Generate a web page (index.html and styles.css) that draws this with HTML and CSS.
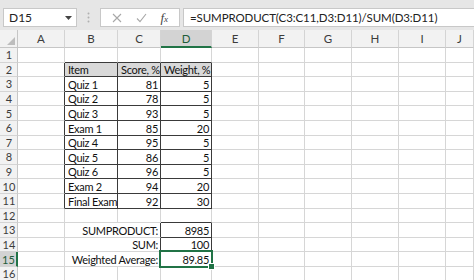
FILE: index.html
```html
<!DOCTYPE html>
<html>
<head>
<meta charset="utf-8">
<link rel="stylesheet" href="styles.css">
</head>
<body>
<div class="app">
  <div class="fbar">
    <div class="namebox"><span>D15</span><svg class="dd" width="7" height="4" viewBox="0 0 7 4"><path d="M0 0h7L3.5 4z" fill="#444"/></svg></div>
    <svg class="dots" width="3" height="11" viewBox="0 0 3 11"><circle cx="1.5" cy="1.5" r="1" fill="#b0b0b0"/><circle cx="1.5" cy="5.5" r="1" fill="#b0b0b0"/><circle cx="1.5" cy="9.5" r="1" fill="#b0b0b0"/></svg>
    <div class="btns">
      <svg width="10" height="10" viewBox="0 0 10 10"><path d="M1 1l8 8M9 1l-8 8" stroke="#a8a8a8" stroke-width="1.1"/></svg>
      <svg width="11" height="10" viewBox="0 0 11 10"><path d="M1 5.5l3 3.2L10 1" stroke="#a8a8a8" stroke-width="1.1" fill="none"/></svg>
      <span class="fx">f<span class="x">x</span></span>
    </div>
    <div class="formula">=SUMPRODUCT(C3:C11,D3:D11)/SUM(D3:D11)</div>
  </div>
  <div class="sheet">
    <div class="row hrow">
      <div class="corner"><svg width="8" height="8" viewBox="0 0 8 8"><path d="M8 0v8H0z" fill="#bdbdbd"/></svg></div>
      <div class="ch">A</div><div class="ch">B</div><div class="ch">C</div><div class="ch sel">D</div><div class="ch">E</div><div class="ch">F</div><div class="ch">G</div><div class="ch">H</div><div class="ch">I</div><div class="ch">J</div>
    </div>
    <div class="row">
      <div class="rh">1</div><div class="c"></div><div class="c bb"></div><div class="c bb"></div><div class="c bb"></div><div class="c"></div><div class="c"></div><div class="c"></div><div class="c"></div><div class="c"></div><div class="c"></div>
    </div>
    <div class="row">
      <div class="rh">2</div><div class="c rb"></div><div class="c t hd">Item</div><div class="c t hd">Score, %</div><div class="c t hd">Weight, %</div><div class="c"></div><div class="c"></div><div class="c"></div><div class="c"></div><div class="c"></div><div class="c"></div>
    </div>
    <div class="row">
      <div class="rh">3</div><div class="c rb"></div><div class="c t">Quiz 1</div><div class="c t n">81</div><div class="c t n">5</div><div class="c"></div><div class="c"></div><div class="c"></div><div class="c"></div><div class="c"></div><div class="c"></div>
    </div>
    <div class="row">
      <div class="rh">4</div><div class="c rb"></div><div class="c t">Quiz 2</div><div class="c t n">78</div><div class="c t n">5</div><div class="c"></div><div class="c"></div><div class="c"></div><div class="c"></div><div class="c"></div><div class="c"></div>
    </div>
    <div class="row">
      <div class="rh">5</div><div class="c rb"></div><div class="c t">Quiz 3</div><div class="c t n">93</div><div class="c t n">5</div><div class="c"></div><div class="c"></div><div class="c"></div><div class="c"></div><div class="c"></div><div class="c"></div>
    </div>
    <div class="row">
      <div class="rh">6</div><div class="c rb"></div><div class="c t">Exam 1</div><div class="c t n">85</div><div class="c t n">20</div><div class="c"></div><div class="c"></div><div class="c"></div><div class="c"></div><div class="c"></div><div class="c"></div>
    </div>
    <div class="row">
      <div class="rh">7</div><div class="c rb"></div><div class="c t">Quiz 4</div><div class="c t n">95</div><div class="c t n">5</div><div class="c"></div><div class="c"></div><div class="c"></div><div class="c"></div><div class="c"></div><div class="c"></div>
    </div>
    <div class="row">
      <div class="rh">8</div><div class="c rb"></div><div class="c t">Quiz 5</div><div class="c t n">86</div><div class="c t n">5</div><div class="c"></div><div class="c"></div><div class="c"></div><div class="c"></div><div class="c"></div><div class="c"></div>
    </div>
    <div class="row">
      <div class="rh">9</div><div class="c rb"></div><div class="c t">Quiz 6</div><div class="c t n">96</div><div class="c t n">5</div><div class="c"></div><div class="c"></div><div class="c"></div><div class="c"></div><div class="c"></div><div class="c"></div>
    </div>
    <div class="row">
      <div class="rh">10</div><div class="c rb"></div><div class="c t">Exam 2</div><div class="c t n">94</div><div class="c t n">20</div><div class="c"></div><div class="c"></div><div class="c"></div><div class="c"></div><div class="c"></div><div class="c"></div>
    </div>
    <div class="row">
      <div class="rh">11</div><div class="c rb"></div><div class="c t">Final Exam</div><div class="c t n">92</div><div class="c t n">30</div><div class="c"></div><div class="c"></div><div class="c"></div><div class="c"></div><div class="c"></div><div class="c"></div>
    </div>
    <div class="row">
      <div class="rh">12</div><div class="c"></div><div class="c"></div><div class="c"></div><div class="c bb"></div><div class="c"></div><div class="c"></div><div class="c"></div><div class="c"></div><div class="c"></div><div class="c"></div>
    </div>
    <div class="row">
      <div class="rh">13</div><div class="c"></div><div class="c span n rb">SUMPRODUCT:</div><div class="c t n">8985</div><div class="c"></div><div class="c"></div><div class="c"></div><div class="c"></div><div class="c"></div><div class="c"></div>
    </div>
    <div class="row">
      <div class="rh">14</div><div class="c"></div><div class="c span n rb">SUM:</div><div class="c t n">100</div><div class="c"></div><div class="c"></div><div class="c"></div><div class="c"></div><div class="c"></div><div class="c"></div>
    </div>
    <div class="row">
      <div class="rh sel">15</div><div class="c"></div><div class="c span n rb">Weighted Average:</div><div class="c t n active">89.85</div><div class="c"></div><div class="c"></div><div class="c"></div><div class="c"></div><div class="c"></div><div class="c"></div>
    </div>
    <div class="row">
      <div class="rh">16</div><div class="c"></div><div class="c"></div><div class="c"></div><div class="c"></div><div class="c"></div><div class="c"></div><div class="c"></div><div class="c"></div><div class="c"></div><div class="c"></div>
    </div>
  </div>
</div>
</body>
</html>
```
FILE: styles.css
```css
* { box-sizing: border-box; }
html, body { margin: 0; padding: 0; }
body {
  width: 474px;
  height: 280px;
  overflow: hidden;
  background: #fff;
  font-family: Lato, "Open Sans", sans-serif;
  color: #1a1a1a;
}
.app { display: flex; flex-direction: column; width: 474px; }

.fbar {
  height: 30px;
  background: #e6e6e6;
  display: flex;
  align-items: flex-start;
  padding: 8px 0 0 3px;
}
.namebox {
  width: 74px;
  height: 19px;
  background: #fff;
  border: 1px solid #c8c8c8;
  display: flex;
  align-items: center;
  justify-content: space-between;
  padding: 0 4px 0 5px;
  font-size: 12px;
  color: #222;
}
.dots { margin: 4px 0 0 10px; }
.btns {
  margin-left: 10px;
  width: 80px;
  height: 19px;
  background: #fff;
  border: 1px solid #c8c8c8;
  display: flex;
  align-items: center;
  justify-content: space-around;
  padding: 0 4px;
}
.fx {
  font-family: "Liberation Serif", serif;
  font-style: italic;
  font-size: 13px;
  color: #444;
}
.fx .x { font-size: 9px; }
.formula {
  margin-left: 3px;
  flex: 1;
  height: 19px;
  background: #fff;
  border: 1px solid #c8c8c8;
  border-right: none;
  font-size: 11.5px;
  letter-spacing: -0.1px;
  line-height: 17px;
  padding-left: 6px;
  color: #222;
  white-space: nowrap;
}

.sheet { display: flex; flex-direction: column; }
.row {
  display: grid;
  grid-template-columns: 18px 47px 53px 43px 51px 47px 46px 47px 47px 47px 28px;
  height: 14.6px;
}
.row.hrow { height: 18px; }
.corner {
  background: #f2f2f2;
  border-right: 1px solid #c6c6c6;
  border-bottom: 1px solid #c6c6c6;
  display: flex;
  align-items: flex-end;
  justify-content: flex-end;
  padding: 0 2px 2px 0;
}
.ch {
  background: #f2f2f2;
  border-right: 1px solid #d4d4d4;
  border-bottom: 1px solid #c6c6c6;
  font-size: 11.5px;
  color: #3c3c3c;
  display: flex;
  align-items: center;
  justify-content: center;
}
.ch.sel {
  background: #d3d3d3;
  border-bottom: 2px solid #217346;
  color: #1e5c3a;
}
.rh {
  background: #f2f2f2;
  border-right: 1px solid #c6c6c6;
  border-bottom: 1px solid #d4d4d4;
  font-size: 11px;
  color: #3c3c3c;
  display: flex;
  align-items: center;
  justify-content: center;
  padding-left: 1px;
}
.rh.sel {
  background: #d3d3d3;
  border-right: 2px solid #217346;
  color: #1e5c3a;
}
.c {
  border-right: 1px solid #d6d6d6;
  border-bottom: 1px solid #d6d6d6;
  font-size: 11px;
  letter-spacing: -0.3px;
  line-height: 13px;
  white-space: nowrap;
  padding: 0 3px;
  display: flex;
  align-items: flex-end;
  color: #111;
}
.c.n { justify-content: flex-end; padding-right: 2px; }
.c.t { border-right-color: #3a3a3a; border-bottom-color: #3a3a3a; }
.c.rb { border-right-color: #3a3a3a; }
.c.bb { border-bottom-color: #3a3a3a; }
.c.hd { background: #d9d9d9; }
.c.span { grid-column: span 2; }
.c.active { position: relative; }
.c.active::after {
  content: "";
  position: absolute;
  left: -2px;
  top: -2px;
  right: -2px;
  bottom: -2px;
  border: 2px solid #217346;
}
.c.active::before {
  content: "";
  position: absolute;
  right: -4px;
  bottom: -4px;
  width: 5px;
  height: 5px;
  background: #217346;
  border: 1px solid #fff;
  z-index: 2;
}
```
